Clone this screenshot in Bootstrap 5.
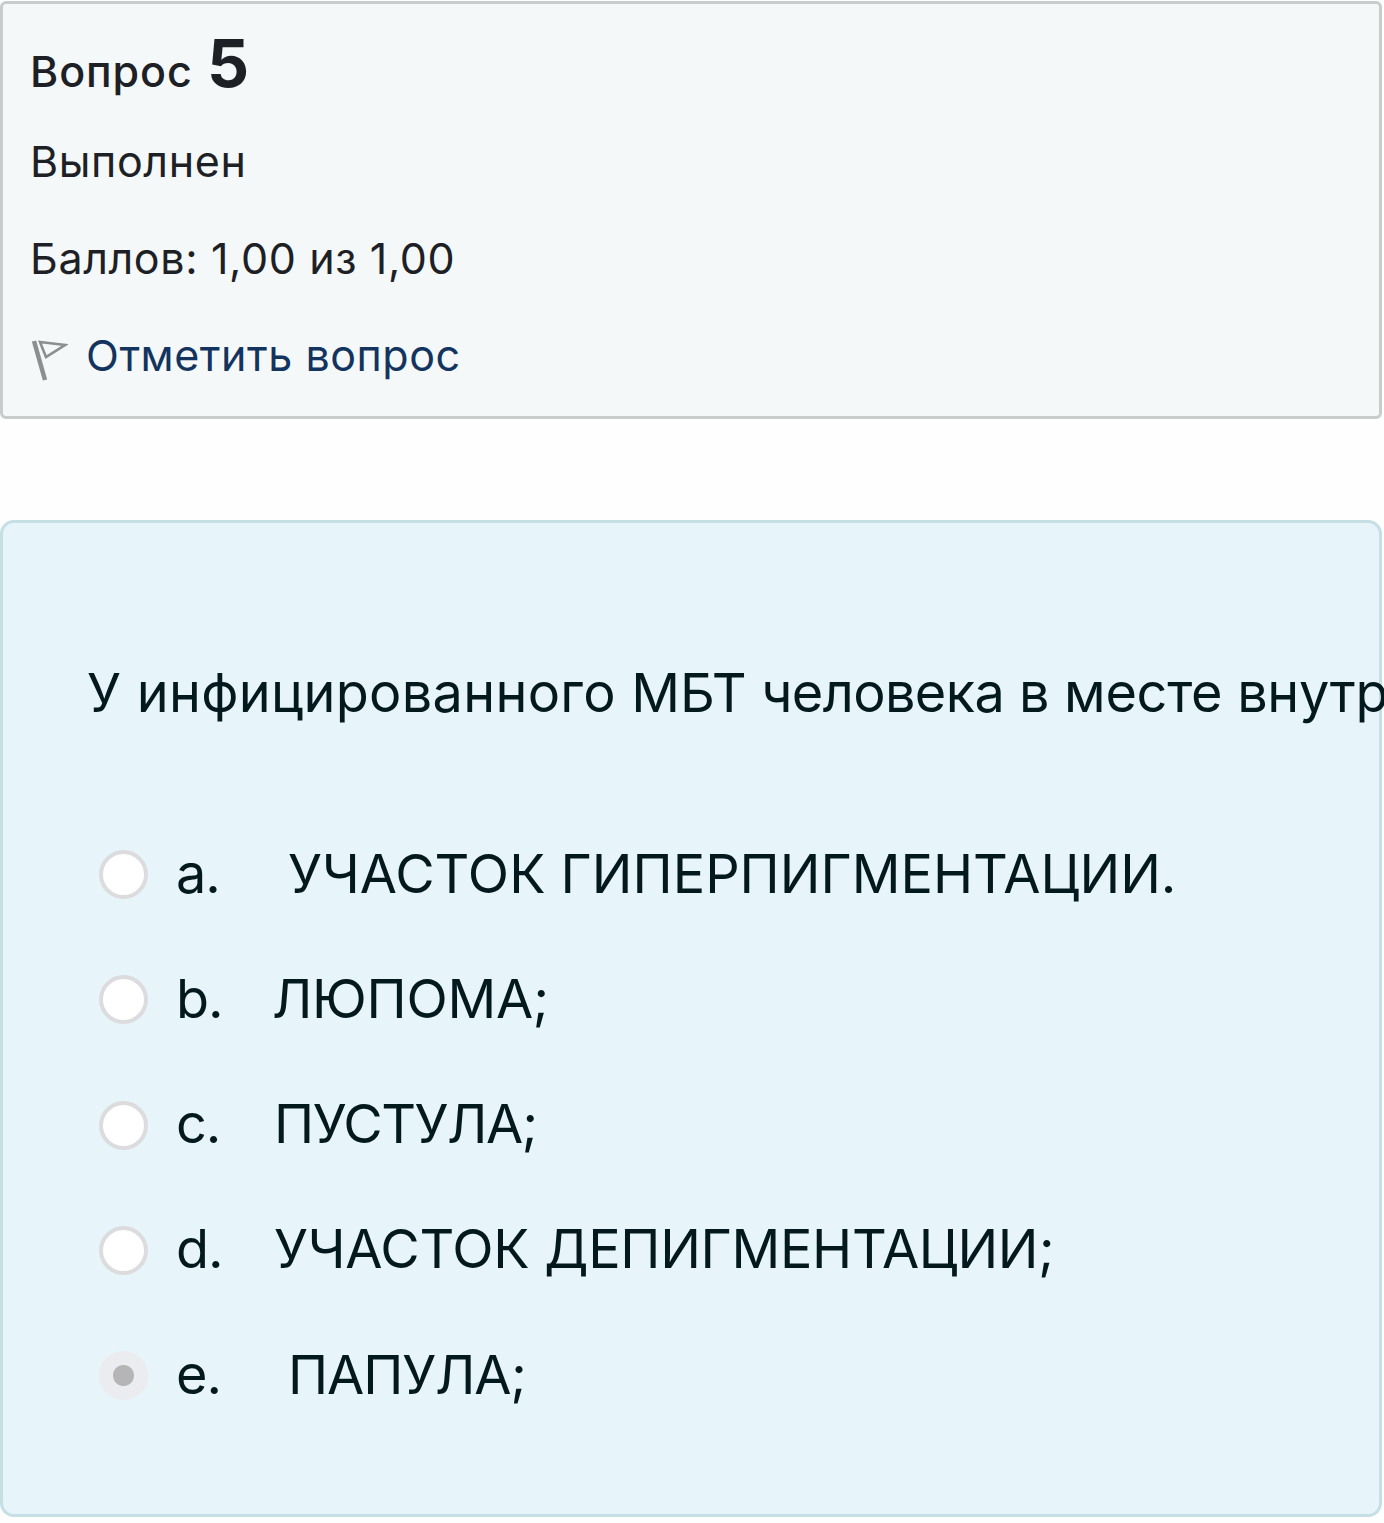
<!DOCTYPE html>
<html lang="ru">
<head>
<meta charset="utf-8">
<meta name="viewport" content="width=device-width, initial-scale=1">
<title>Вопрос 5</title>
<link href="https://cdn.jsdelivr.net/npm/bootstrap@5.3.0/dist/css/bootstrap.min.css" rel="stylesheet">
<style>
body{font-family:Inter,"Liberation Sans",sans-serif;background:#fefefe;overflow-x:hidden}
.page{width:1382px;padding-top:1px}
.info{height:418px;border:3px solid #c8cccd;border-radius:6px;background:#f5f8f8;color:#1d2125;padding:12px 28px 0 27px;font-size:43px;line-height:97px;letter-spacing:.62px}
.info-title{height:97px;padding-top:7px;font-weight:500;font-size:43px;line-height:97px;letter-spacing:.9px}
.info-num{font-size:66px;font-weight:700;line-height:1;margin-left:2px}
.flag-link{color:#12345f;letter-spacing:.52px}
.flag-icon{width:37px;height:44px;margin-left:1px;margin-right:18px;margin-top:8px}
.question{height:997px;margin-top:101px;border:3px solid #c5dfe4;border-radius:14px;background:#e7f4f9;color:#04191d;padding:124px 0 0 84px;font-size:54px}
.qtext{height:92px;line-height:92px;white-space:nowrap}
.sp-wide{letter-spacing:.3px}
.sp-narrow{letter-spacing:-.6px}
.sp-snug{letter-spacing:-.3px}
.answers{margin-top:72px}
.answer{height:125.25px;line-height:1}
.answer .form-check-input{width:49px;height:49px;margin:2px 0 0 12px;border:4.5px solid #dcdcde;background-color:#fff;opacity:1;flex:none}
.answer .form-check-input:checked{border-color:#ebecef;background:radial-gradient(circle,#b5b5b5 0 10px,#ebecef 11px)}
.letter{width:98px;margin-left:28px;flex:none;letter-spacing:-1px}
.indent{margin-left:14px}
.sp-b{letter-spacing:-.3px;margin-left:-2px}
.sp-c{letter-spacing:-1.5px}
.sp-d{letter-spacing:-.3px}
.sp-e{letter-spacing:-1.1px}
</style>
</head>
<body>
<main class="page">
  <section class="info">
    <h3 class="info-title mb-0">Вопрос <span class="info-num">5</span></h3>
    <div>Выполнен</div>
    <div>Баллов: 1,00 из 1,00</div>
    <a href="#" class="flag-link d-flex align-items-center text-decoration-none">
      <svg class="flag-icon" viewBox="0 0 37 44" fill="none" stroke="#8b8f90"><path d="M3 3L14 42" stroke-width="4.5"/><path d="M9 4L34 7L15 19Z" stroke-width="2.6"/></svg>
      <span>Отметить вопрос</span>
    </a>
  </section>
  <section class="question">
    <div class="qtext"><span class="sp-wide">У инфицированного</span> МБТ<span class="sp-narrow"> человека</span><span class="sp-snug"> в месте внутр</span></div>
    <div class="answers">
      <label class="answer d-flex align-items-center"><input class="form-check-input" type="radio" name="q5"><span class="letter">a.</span><span class="indent">УЧАСТОК ГИПЕРПИГМЕНТАЦИИ.</span></label>
      <label class="answer d-flex align-items-center"><input class="form-check-input" type="radio" name="q5"><span class="letter">b.</span><span class="sp-b">ЛЮПОМА;</span></label>
      <label class="answer d-flex align-items-center"><input class="form-check-input" type="radio" name="q5"><span class="letter">c.</span><span class="sp-c">ПУСТУЛА;</span></label>
      <label class="answer d-flex align-items-center"><input class="form-check-input" type="radio" name="q5"><span class="letter">d.</span><span class="sp-d">УЧАСТОК ДЕПИГМЕНТАЦИИ;</span></label>
      <label class="answer d-flex align-items-center"><input class="form-check-input" type="radio" name="q5" checked><span class="letter">e.</span><span class="indent sp-e">ПАПУЛА;</span></label>
    </div>
  </section>
</main>
<script src="https://cdn.jsdelivr.net/npm/bootstrap@5.3.0/dist/js/bootstrap.bundle.min.js"></script>
</body>
</html>
